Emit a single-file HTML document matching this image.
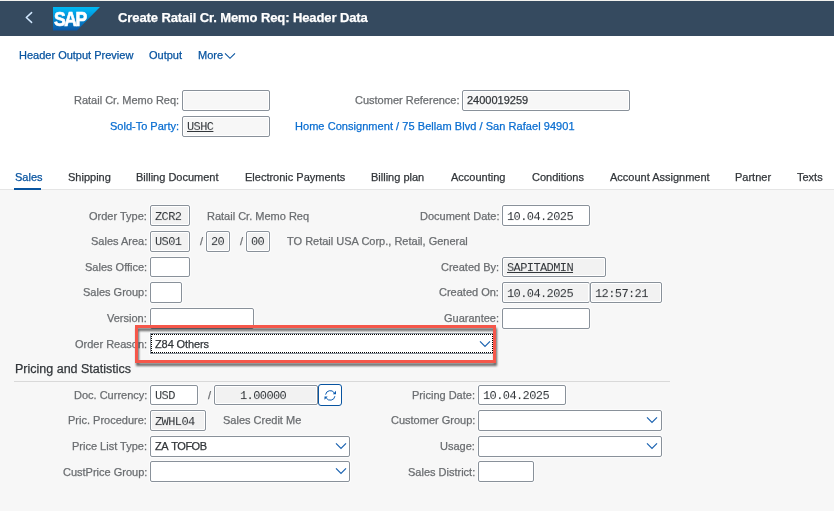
<!DOCTYPE html>
<html><head><meta charset="utf-8"><style>
*{box-sizing:border-box}
html,body{margin:0;padding:0;width:834px;height:511px;overflow:hidden;background:#fff;font-family:"Liberation Sans",sans-serif;font-size:11px;color:#32363a}
.a{position:absolute;white-space:nowrap;line-height:13px;will-change:transform;-webkit-text-stroke:0.25px currentColor}
.title{color:#fff;font-weight:bold;font-size:13px;letter-spacing:-0.1px;line-height:15px}
.lnk{color:#0854a0}
.lnk2{color:#0a6ed1}
.lbl{color:#6a6d70}
.g{color:#6a6d70}
.inp{position:absolute;border:1px solid #89919a;border-radius:2px;background:#fff;box-shadow:inset 0 0 0 1px #fff,0 0 0 1px rgba(255,255,255,.6)}
.roh{background:#f7f7f7}
.ro{background:#f2f2f2}
.mono{font-family:"Liberation Mono",monospace;font-size:12px;letter-spacing:-0.6px;color:#32363a;transform:scaleY(0.9);transform-origin:0 0;-webkit-text-stroke:0}
</style></head><body>
<div class="a" style="left:0;top:0;width:834px;height:1px;background:#f2f2ee"></div>
<div class="a" style="left:0;top:1px;width:834px;height:35px;background:#354a5f"></div>
<svg class="a" style="left:20px;top:8px" width="16" height="20" viewBox="20 8 16 20"><path d="M31.6 12.6 L26.3 17.5 L31.6 22.4" fill="none" stroke="#d1e8ff" stroke-width="1.5" stroke-linecap="round" stroke-linejoin="round"/></svg>
<svg class="a" style="left:53px;top:7px" width="47" height="24" viewBox="0 0 47 24">
<defs><linearGradient id="g" x1="0" y1="0" x2="0" y2="1"><stop offset="0" stop-color="#00b9f2"/><stop offset="0.15" stop-color="#00aeef"/><stop offset="1" stop-color="#0a56a6"/></linearGradient></defs>
<path d="M0 0 H47 L24 23.5 H0 Z" fill="url(#g)"/>
<text x="1.2" y="18.7" font-family="Liberation Sans" font-weight="bold" font-size="19.5" fill="#fff" stroke="#fff" stroke-width="0.7" letter-spacing="-1.6" transform="scale(0.9 1)">SAP</text>
</svg>
<div class="a title" style="left:118px;top:10px">Create Ratail Cr. Memo Req: Header Data</div>
<div class="a lnk" style="left:19px;top:49px;">Header Output Preview</div>
<div class="a lnk" style="left:149px;top:49px;">Output</div>
<div class="a lnk" style="left:197.5px;top:49px;">More</div>
<svg class="a" style="left:224px;top:52px" width="12" height="8" viewBox="0 0 12 8"><path d="M1 1.3 L6 6.3 L11 1.3" fill="none" stroke="#0854a0" stroke-width="1.1"/></svg>
<div class="a lbl" style="right:655px;top:94px;">Ratail Cr. Memo Req:</div>
<div class="inp roh" style="left:182px;top:90px;width:88px;height:21px;"></div>
<div class="a lnk2" style="right:655px;top:120px;">Sold-To Party:</div>
<div class="inp roh" style="left:182px;top:116px;width:88px;height:21px;"></div>
<div class="a mono" style="left:187px;top:122px;text-decoration:underline">USHC</div>
<div class="a lbl" style="right:374px;top:94px;">Customer Reference:</div>
<div class="inp roh" style="left:462px;top:90px;width:168px;height:21px;"></div>
<div class="a " style="left:466.5px;top:94px;">2400019259</div>
<div class="a lnk2" style="left:295px;top:120px;letter-spacing:0.05px">Home Consignment / 75 Bellam Blvd / San Rafael 94901</div>
<div class="a" style="left:0;top:189px;width:834px;height:1px;background:#e5e5e5"></div>
<div class="a" style="left:0;top:190px;width:834px;height:321px;background:#f7f7f7"></div>
<div class="a lnk" style="left:14.5px;top:171px;">Sales</div>
<div class="a" style="left:14px;top:188px;width:27px;height:2px;background:#0854a0"></div>
<div class="a " style="left:67.5px;top:171px;">Shipping</div>
<div class="a " style="left:135.8px;top:171px;">Billing Document</div>
<div class="a " style="left:245px;top:171px;">Electronic Payments</div>
<div class="a " style="left:371px;top:171px;">Billing plan</div>
<div class="a " style="left:451px;top:171px;">Accounting</div>
<div class="a " style="left:532px;top:171px;">Conditions</div>
<div class="a " style="left:609.6px;top:171px;">Account Assignment</div>
<div class="a " style="left:735.4px;top:171px;">Partner</div>
<div class="a " style="left:796.5px;top:171px;">Texts</div>
<div class="a lbl" style="right:687px;top:210px;">Order Type:</div>
<div class="inp ro" style="left:150px;top:205px;width:40px;height:21px;"></div>
<div class="a mono" style="left:155px;top:212px;">ZCR2</div>
<div class="a g" style="left:207px;top:210px;">Ratail Cr. Memo Req</div>
<div class="a lbl" style="right:687px;top:235px;">Sales Area:</div>
<div class="inp ro" style="left:150px;top:231px;width:40px;height:21px;"></div>
<div class="a mono" style="left:155px;top:237px;">US01</div>
<div class="a g" style="left:200px;top:235px;">/</div>
<div class="inp ro" style="left:206px;top:231px;width:24px;height:21px;"></div>
<div class="a mono" style="left:211px;top:237px;">20</div>
<div class="a g" style="left:240px;top:235px;">/</div>
<div class="inp ro" style="left:246px;top:231px;width:24px;height:21px;"></div>
<div class="a mono" style="left:251px;top:237px;">00</div>
<div class="a g" style="left:287px;top:235px;">TO Retail USA Corp., Retail, General</div>
<div class="a lbl" style="right:687px;top:261px;">Sales Office:</div>
<div class="inp " style="left:150px;top:257px;width:40px;height:20px;"></div>
<div class="a lbl" style="right:687px;top:286px;">Sales Group:</div>
<div class="inp " style="left:150px;top:282px;width:32px;height:21px;"></div>
<div class="a lbl" style="right:687px;top:312px;">Version:</div>
<div class="inp " style="left:150px;top:308px;width:104px;height:21px;"></div>
<div class="a lbl" style="right:687px;top:338px;">Order Reason:</div>
<div class="inp " style="left:150px;top:333px;width:344px;height:21px;border-radius:0"></div>
<div class="a" style="left:151px;top:334px;width:342px;height:19px;border:1px dotted #000"></div>
<div class="a " style="left:155px;top:338px;letter-spacing:-0.1px">Z84 Others</div>
<svg class="a" style="left:479px;top:340px" width="12" height="8" viewBox="0 0 12 8"><path d="M1 1.3 L6 6.3 L11 1.3" fill="none" stroke="#1a62b0" stroke-width="1.2"/></svg>
<div class="a lbl" style="right:335px;top:210px;">Document Date:</div>
<div class="inp " style="left:502px;top:205px;width:88px;height:21px;"></div>
<div class="a mono" style="left:507px;top:212px;">10.04.2025</div>
<div class="a lbl" style="right:335px;top:261px;">Created By:</div>
<div class="inp ro" style="left:502px;top:257px;width:104px;height:20px;"></div>
<div class="a mono" style="left:507px;top:263px;text-decoration:underline">SAPITADMIN</div>
<div class="a lbl" style="right:335px;top:286px;">Created On:</div>
<div class="inp ro" style="left:502px;top:282px;width:88px;height:21px;"></div>
<div class="a mono" style="left:507px;top:289px;">10.04.2025</div>
<div class="inp ro" style="left:590px;top:282px;width:72px;height:21px;"></div>
<div class="a mono" style="left:595px;top:289px;">12:57:21</div>
<div class="a lbl" style="right:335px;top:312px;">Guarantee:</div>
<div class="inp " style="left:502px;top:308px;width:88px;height:21px;"></div>
<div class="a" style="left:135px;top:325px;width:361px;height:38px;border:3px solid #f5574a;filter:drop-shadow(1.5px 3px 1px rgba(0,0,0,0.58))"></div>
<div class="a" style="left:15px;top:362px;font-size:12.5px;line-height:15px">Pricing and Statistics</div>
<div class="a" style="left:14px;top:381px;width:656px;height:1px;background:#d9d9d9"></div>
<div class="a lbl" style="right:687px;top:389px;">Doc. Currency:</div>
<div class="inp " style="left:150px;top:385px;width:48px;height:20px;"></div>
<div class="a mono" style="left:155px;top:391px;">USD</div>
<div class="a g" style="left:208px;top:389px;">/</div>
<div class="inp ro" style="left:214px;top:385px;width:104px;height:20px;"></div>
<div class="a mono" style="left:240px;top:391px;">1.00000</div>
<div class="a" style="left:318px;top:384px;width:24px;height:22px;border:1px solid #0854a0;border-radius:3px;background:#fff"></div>
<svg class="a" style="left:318px;top:384px" width="24" height="22" viewBox="318 384 24 22"><path d="M325.6 394.6 A4.7 4.7 0 0 1 334.2 392.8 M334.9 396.2 A4.7 4.7 0 0 1 326.2 397.9" fill="none" stroke="#0a5bb0" stroke-width="1"/><path d="M336 390.8 L336 394.2 L332.8 394.2 Z" fill="#0a5bb0"/><path d="M324.5 399.8 L324.5 396.4 L327.7 396.4 Z" fill="#0a5bb0"/></svg>
<div class="a lbl" style="right:687px;top:414px;">Pric. Procedure:</div>
<div class="inp ro" style="left:150px;top:410px;width:56px;height:21px;"></div>
<div class="a mono" style="left:155px;top:417px;">ZWHL04</div>
<div class="a g" style="left:223px;top:414px;">Sales Credit Me</div>
<div class="a lbl" style="right:687px;top:440px;">Price List Type:</div>
<div class="inp " style="left:150px;top:436px;width:200px;height:21px;"></div>
<div class="a " style="left:155px;top:440px;letter-spacing:-0.5px;word-spacing:1.5px">ZA TOFOB</div>
<svg class="a" style="left:335px;top:442px" width="12" height="8" viewBox="0 0 12 8"><path d="M1 1.3 L6 6.3 L11 1.3" fill="none" stroke="#1a62b0" stroke-width="1.2"/></svg>
<div class="a lbl" style="right:687px;top:466px;">CustPrice Group:</div>
<div class="inp " style="left:150px;top:461px;width:200px;height:21px;"></div>
<svg class="a" style="left:335px;top:467px" width="12" height="8" viewBox="0 0 12 8"><path d="M1 1.3 L6 6.3 L11 1.3" fill="none" stroke="#1a62b0" stroke-width="1.2"/></svg>
<div class="a lbl" style="right:359px;top:389px;">Pricing Date:</div>
<div class="inp " style="left:478px;top:385px;width:88px;height:20px;"></div>
<div class="a mono" style="left:483px;top:391px;">10.04.2025</div>
<div class="a lbl" style="right:359px;top:414px;">Customer Group:</div>
<div class="inp " style="left:478px;top:410px;width:184px;height:21px;"></div>
<svg class="a" style="left:646px;top:416px" width="12" height="8" viewBox="0 0 12 8"><path d="M1 1.3 L6 6.3 L11 1.3" fill="none" stroke="#1a62b0" stroke-width="1.2"/></svg>
<div class="a lbl" style="right:359px;top:440px;">Usage:</div>
<div class="inp " style="left:478px;top:436px;width:184px;height:21px;"></div>
<svg class="a" style="left:646px;top:442px" width="12" height="8" viewBox="0 0 12 8"><path d="M1 1.3 L6 6.3 L11 1.3" fill="none" stroke="#1a62b0" stroke-width="1.2"/></svg>
<div class="a lbl" style="right:359px;top:466px;">Sales District:</div>
<div class="inp " style="left:478px;top:461px;width:56px;height:21px;"></div>
</body></html>
